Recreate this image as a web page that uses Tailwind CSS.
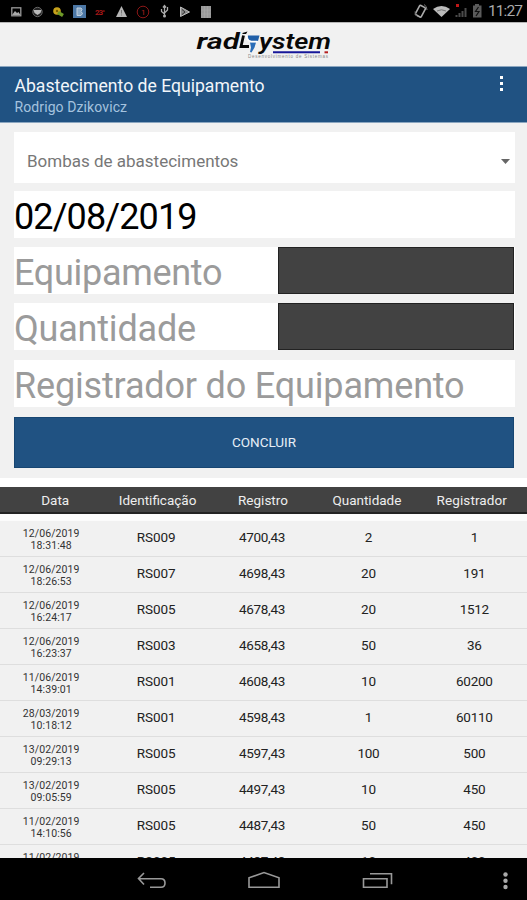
<!DOCTYPE html>
<html lang="pt-BR">
<head>
    <meta charset="UTF-8">
    <meta name="viewport" content="width=device-width, initial-scale=1.0">
    <title>Abastecimento de Equipamento</title>
    <script src="https://cdn.jsdelivr.net/npm/@tailwindcss/browser@4"></script>
</head>
<body class="h-[900px] overflow-hidden flex flex-col bg-[#f1f1f1] font-['Roboto',sans-serif] text-[#222]">
    <!-- Status bar -->
    <div class="h-[22px] shrink-0 bg-black">
        <svg class="block" width="527" height="22" viewBox="0 0 527 22">
            <rect x="11.8" y="7.8" width="9" height="8" fill="none" stroke="#999" stroke-width="1.3"/>
            <path d="M12 15l3-4 2 2 1.500-1 2 3z" fill="#aaa"/>
            <circle cx="37.500" cy="12" r="4.700" fill="#222" stroke="#666"/>
            <path d="M33.500 10h8l-1 3-3 2-3-2z" fill="#bbb"/>
            <circle cx="57" cy="11" r="3.800" fill="#c7a21c"/>
            <path d="M58 12.500l5 3" stroke="#6f9a28" stroke-width="3.500"/>
            <circle cx="57" cy="11" r="1.200" fill="#775f00"/>
            <rect x="73" y="5" width="13" height="13" fill="#4c77a5"/>
            <path d="M77 8h4q2 1 0 3.500q3 2 0 4h-4z" fill="#8caac6" stroke="#c2d0dd"/>
            <text x="95" y="15" font-size="8" font-weight="700" fill="#a51717" textLength="10">23°</text>
            <path d="M121.500 6l5.500 11h-11z" fill="#b5b5b5"/>
            <path d="M121.500 10v3.500M121.500 14.500v1" stroke="#777"/>
            <circle cx="143" cy="12" r="5.800" fill="none" stroke="#8c1717"/>
            <text x="141" y="15" font-size="8" fill="#b02020">1</text>
            <path d="M164.500 17V6M164.500 14l-3-2.500V9M164.500 13l3-3V7M163 7.500l1.500-2 1.500 2" fill="none" stroke="#aaa" stroke-width="1.300"/>
            <circle cx="164.500" cy="16" r="1.500" fill="#aaa"/>
            <path d="M180.500 7l9 5-9 4.500z" fill="#888" stroke="#bbb"/>
            <path d="M182 9.500l3 2.500-3 2.500" fill="none" stroke="#333"/>
            <rect x="201" y="6" width="10" height="12" fill="#999"/>
            <path d="M204.500 6v12M207.500 6v12M201 10h10M201 14h10" stroke="#aaa" stroke-width=".6"/>
            <rect x="417.300" y="6" width="6.500" height="10.500" rx="1" transform="rotate(28 420.500 11)" fill="none" stroke="#aaa" stroke-width="1.600"/>
            <path d="M415 11.500q0 4 3 5.500M427 10q0-4-3-5.500" fill="none" stroke="#777"/>
            <path d="M433 9q8.500-6 17 0L441.500 17z" fill="#bbb"/>
            <path d="M437 11q4.500-2.500 9 0" fill="none" stroke="#777"/>
            <path d="M456.500 17v-2M459.500 17v-4M462.500 17v-6M465.500 17V8" stroke="#4c4c4c" stroke-width="2"/>
            <rect x="456" y="4" width="3" height="3" fill="#c01818"/>
            <path d="M473 5.500h2V4h4v1.500h2.500v12H473z" fill="#5b5b5b"/>
            <path d="M478.500 7l-3 4.500h3.500l-3 4.500" fill="none" stroke="#111" stroke-width="1.200"/>
            <text x="488" y="16.200" font-size="15.500" fill="#aaa" textLength="35">11:27</text>
        </svg>
    </div>

    <!-- Logo -->
    <div class="h-[43px] shrink-0 flex justify-center border-t border-[#b5b5b5] bg-[#f1f1f1]">
        <svg width="140" height="42" viewBox="194 23 140 42">
            <g font-family="Roboto, sans-serif" font-weight="600" font-style="italic" font-size="22.500" fill="#080808">
                <text x="196.500" y="48.500" textLength="43" lengthAdjust="spacingAndGlyphs">rad</text>
                <text x="259" y="48.500" textLength="72" lengthAdjust="spacingAndGlyphs">ystem</text>
            </g>
            <path d="M243.500 35.500l-2.500 11h8" fill="none" stroke="#080808" stroke-width="2.800"/>
            <path d="M242.500 33l5-1.500-1.500 2.500h-3.500z" fill="#080808"/>
            <path d="M248 35.500h11.500l-1.500 5.500h-6.500q-4-1-3.500-5.500z" fill="#205fa8"/>
            <path d="M250 42.500h6l-1.500 5-3 5-1.500-.5 1-4.500z" fill="#2a6db8"/>
            <path d="M246.500 35q-.5 6 4.500 6.500h6.500" fill="none" stroke="#fff" stroke-width="1.500"/>
            <path d="M273 52.300h47" stroke="#171799" stroke-width="2"/>
            <path d="M324.500 52.300h3.500" stroke="#b52020" stroke-width="2"/>
            <text x="248" y="58.300" font-family="Liberation Sans, sans-serif" font-size="4.500" fill="#888" textLength="80">Desenvolvimento de Sistemas</text>
        </svg>
    </div>

    <!-- Title bar -->
    <header class="mt-px h-[57px] shrink-0 flex justify-between border-t border-b border-t-[#8ba6c0] border-b-[#8ba6c0] bg-[#205282] pl-[14.5px] pr-[24px]">
        <div class="pt-[9px]">
            <h1 class="text-[17.6px] leading-[21px] text-[#f2f6fa] whitespace-nowrap">Abastecimento de Equipamento</h1>
            <p class="text-[14px] tracking-[0.1px] leading-[20px] text-[#a5c3df]">Rodrigo Dzikovicz</p>
        </div>
        <div class="flex flex-col gap-[3px] pt-[9px]">
            <span class="size-[3px] bg-white"></span>
            <span class="size-[3px] bg-white"></span>
            <span class="size-[3px] bg-white"></span>
        </div>
    </header>

    <!-- Form -->
    <form class="h-[355px] shrink-0 flex flex-col pt-[9px] pl-[14px] pr-[12px] text-[36px] leading-[47px]">
        <div class="h-[51px] mb-2 flex items-center justify-between bg-white pl-[13px] pr-[5px] pt-[7px] text-[17px] text-[#777]">
            <span>Bombas de abastecimentos</span>
            <svg width="9" height="5" viewBox="0 0 9 5"><path d="M0 0h9L4.500 5z" fill="#666"/></svg>
        </div>
        <div class="h-[47px] mb-[9px] bg-white pt-[3px] tracking-[-0.9px] text-black">02/08/2019</div>
        <div class="h-[47px] mb-[9px] flex bg-white tracking-[-0.3px] text-[#9b9b9b]">
            <span class="w-[264px] pt-[3px]">Equipamento</span>
            <span class="w-[236px] border border-[#222] bg-[#424242]"></span>
        </div>
        <div class="h-[47px] mb-[10px] flex bg-white tracking-[-0.2px] text-[#9b9b9b]">
            <span class="w-[264px] pt-[3px]">Quantidade</span>
            <span class="w-[236px] border border-[#222] bg-[#424242]"></span>
        </div>
        <div class="h-[47px] mb-[10px] bg-white pt-[3px] tracking-[-0.17px] text-[#9b9b9b] whitespace-nowrap">Registrador do Equipamento</div>
        <button type="button" class="h-[51px] mr-px border border-[#174672] bg-[#205282] text-[13.5px] leading-none text-[#e6eef6]">CONCLUIR</button>
    </form>

    <!-- History -->
    <div class="h-[36px] shrink-0 border-t-[9px] border-white bg-[#424242]">
        <div class="h-[27px] grid grid-cols-5 items-center border-b-2 border-[#222] pt-px text-center text-[13.5px] text-[#eee]">
            <span class="pl-[5px]">Data</span>
            <span class="pr-px">Identificação</span>
            <span class="pr-px">Registro</span>
            <span class="pr-[4px]">Quantidade</span>
            <span class="pr-[5px] tracking-[0.1px]">Registrador</span>
        </div>
    </div>
    <div class="h-[7px] shrink-0 bg-[#fbfbfb]"></div>
    <main id="rows" class="h-[337px] shrink-0 overflow-hidden"></main>

    <!-- Navigation bar -->
    <nav class="h-[42px] shrink-0 bg-black">
        <svg class="block" width="527" height="42" viewBox="0 858 527 42" fill="none" stroke="#999" stroke-width="1.600">
            <path d="M144 873l-5.500 5.500 5.500 6M139 878.700h22q4 0 4 4.300t-4 4.300h-11"/>
            <path d="M249 887.300v-9.500l15-5.300 15 5.300v9.500z"/>
            <path d="M363.500 878.800h23.500v8.500h-23.500zM370 873.800h21.500v10.500"/>
            <g fill="#aaa" stroke="none">
                <circle cx="505.500" cy="874.500" r="2.200"/>
                <circle cx="505.500" cy="880.700" r="2.200"/>
                <circle cx="505.500" cy="887" r="2.200"/>
            </g>
        </svg>
    </nav>

    <script>
        const rows = [
            ['12/06/2019', '18:31:48', 'RS009', '4700,43', '2', '1'],
            ['12/06/2019', '18:26:53', 'RS007', '4698,43', '20', '191'],
            ['12/06/2019', '16:24:17', 'RS005', '4678,43', '20', '1512'],
            ['12/06/2019', '16:23:37', 'RS003', '4658,43', '50', '36'],
            ['11/06/2019', '14:39:01', 'RS001', '4608,43', '10', '60200'],
            ['28/03/2019', '10:18:12', 'RS001', '4598,43', '1', '60110'],
            ['13/02/2019', '09:29:13', 'RS005', '4597,43', '100', '500'],
            ['13/02/2019', '09:05:59', 'RS005', '4497,43', '10', '450'],
            ['11/02/2019', '14:10:56', 'RS005', '4487,43', '50', '450'],
            ['11/02/2019', '14:08:20', 'RS005', '4437,43', '10', '400']
        ];
        document.getElementById('rows').innerHTML = rows.map(r => `
            <div class="h-[36px] grid grid-cols-5 border-b border-[#dedede] text-center text-[13.5px] tracking-[-0.3px] leading-[33px]">
                <div class="pt-[7px] pr-[3px] text-[10.5px] tracking-[0.1px] leading-[12px] text-[#333]">${r[0]}<br>${r[1]}</div>
                <div class="pr-[4px] tracking-[-0.1px]">${r[2]}</div>
                <div class="pr-[3px]">${r[3]}</div>
                <div class="pr-px">${r[4]}</div>
                <div>${r[5]}</div>
            </div>`).join('');
    </script>
</body>
</html>
